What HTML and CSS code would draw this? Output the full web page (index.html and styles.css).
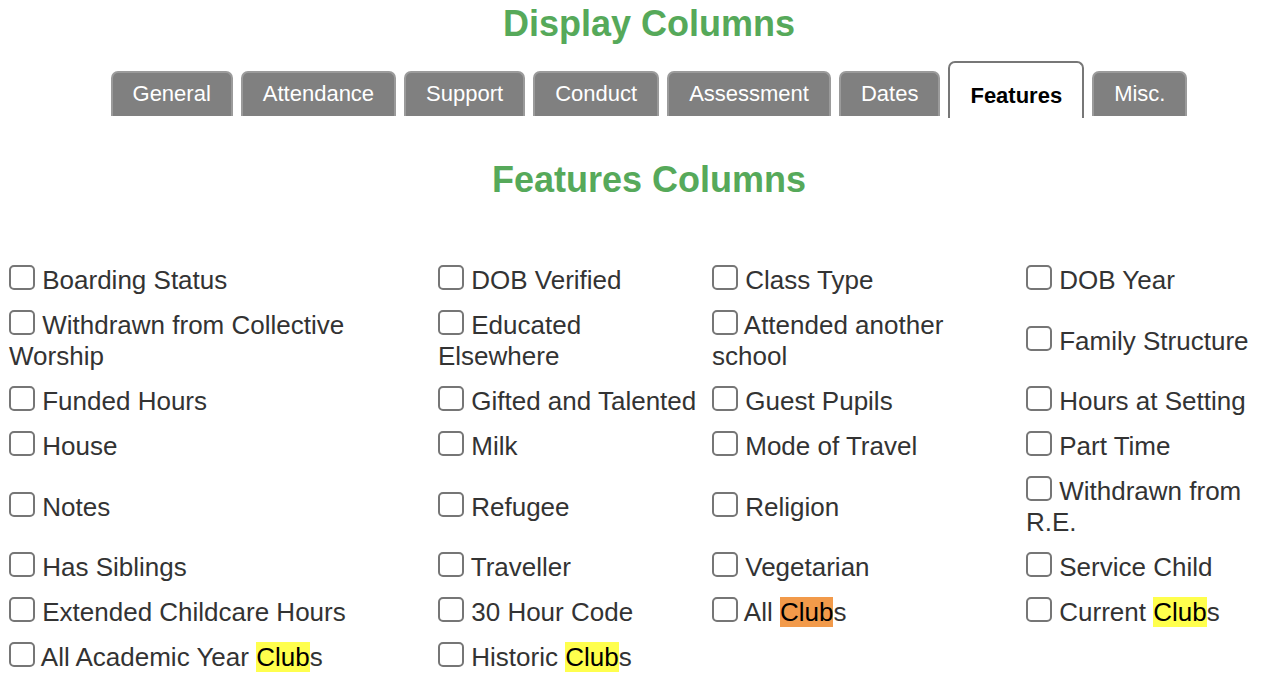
FILE: index.html
```html
<!DOCTYPE html>
<html lang="en">
<head>
    <meta charset="UTF-8">
    <meta name="viewport" content="width=device-width, initial-scale=1.0">
    <link rel="stylesheet" href="styles.css">
    <title>Display Columns</title>
</head>
<body>
    <h1 class="page-heading">Display Columns</h1>

    <div class="tabs">
        <a class="tab" href="#">General</a>
        <a class="tab" href="#">Attendance</a>
        <a class="tab" href="#">Support</a>
        <a class="tab" href="#">Conduct</a>
        <a class="tab" href="#">Assessment</a>
        <a class="tab" href="#">Dates</a>
        <a class="tab active" href="#">Features</a>
        <a class="tab" href="#">Misc.</a>
    </div>

    <h2 class="section-heading">Features Columns</h2>

    <table class="columns">
        <colgroup>
            <col class="col-1">
            <col class="col-2">
            <col class="col-3">
            <col class="col-4">
        </colgroup>
        <tr>
            <td><input type="checkbox" id="boarding"> <label for="boarding">Boarding Status</label></td>
            <td><input type="checkbox" id="dobverified"> <label for="dobverified">DOB Verified</label></td>
            <td><input type="checkbox" id="classtype"> <label for="classtype">Class Type</label></td>
            <td><input type="checkbox" id="dobyear"> <label for="dobyear">DOB Year</label></td>
        </tr>
        <tr>
            <td><input type="checkbox" id="worship"> <label for="worship">Withdrawn from Collective Worship</label></td>
            <td><input type="checkbox" id="elsewhere"> <label for="elsewhere">Educated Elsewhere</label></td>
            <td><input type="checkbox" id="anotherschool"> <label for="anotherschool">Attended another school</label></td>
            <td><input type="checkbox" id="family"> <label for="family">Family Structure</label></td>
        </tr>
        <tr>
            <td><input type="checkbox" id="funded"> <label for="funded">Funded Hours</label></td>
            <td><input type="checkbox" id="gifted"> <label for="gifted">Gifted and Talented</label></td>
            <td><input type="checkbox" id="guest"> <label for="guest">Guest Pupils</label></td>
            <td><input type="checkbox" id="hours"> <label for="hours">Hours at Setting</label></td>
        </tr>
        <tr>
            <td><input type="checkbox" id="house"> <label for="house">House</label></td>
            <td><input type="checkbox" id="milk"> <label for="milk">Milk</label></td>
            <td><input type="checkbox" id="travel"> <label for="travel">Mode of Travel</label></td>
            <td><input type="checkbox" id="parttime"> <label for="parttime">Part Time</label></td>
        </tr>
        <tr>
            <td><input type="checkbox" id="notes"> <label for="notes">Notes</label></td>
            <td><input type="checkbox" id="refugee"> <label for="refugee">Refugee</label></td>
            <td><input type="checkbox" id="religion"> <label for="religion">Religion</label></td>
            <td><input type="checkbox" id="re"> <label for="re">Withdrawn from R.E.</label></td>
        </tr>
        <tr>
            <td><input type="checkbox" id="siblings"> <label for="siblings">Has Siblings</label></td>
            <td><input type="checkbox" id="traveller"> <label for="traveller">Traveller</label></td>
            <td><input type="checkbox" id="vegetarian"> <label for="vegetarian">Vegetarian</label></td>
            <td><input type="checkbox" id="service"> <label for="service">Service Child</label></td>
        </tr>
        <tr>
            <td><input type="checkbox" id="childcare"> <label for="childcare">Extended Childcare Hours</label></td>
            <td><input type="checkbox" id="code30"> <label for="code30">30 Hour Code</label></td>
            <td><input type="checkbox" id="allclubs"> <label for="allclubs">All <mark class="current">Club</mark>s</label></td>
            <td><input type="checkbox" id="currentclubs"> <label for="currentclubs">Current <mark>Club</mark>s</label></td>
        </tr>
        <tr>
            <td><input type="checkbox" id="yearclubs"> <label for="yearclubs">All Academic Year <mark>Club</mark>s</label></td>
            <td><input type="checkbox" id="historic"> <label for="historic">Historic <mark>Club</mark>s</label></td>
            <td></td>
            <td></td>
        </tr>
    </table>
</body>
</html>
```

FILE: styles.css
```css
* {
    box-sizing: border-box;
}
body {
    margin: 3px 8px 8px;
    font-family: "Liberation Sans", Arial, sans-serif;
    color: #333;
    background-color: #fff;
}

.page-heading,
.section-heading {
    margin: 0;
    padding-left: 28px;
    text-align: center;
    font-size: 36px;
    font-weight: bold;
    color: #56a95a;
}

/* tabs */
.tabs {
    display: flex;
    justify-content: center;
    align-items: flex-end;
    gap: 8px;
    margin-top: 16px;
    padding-left: 28px;
}
.tab {
    display: block;
    padding: 9px 20px 10px;
    font-size: 22px;
    line-height: 24px;
    color: #fff;
    text-decoration: none;
    background-color: #808080;
    border: 2px solid #9b9b9b;
    border-bottom: none;
    border-radius: 7px 7px 0 0;
}
.tab.active {
    padding: 21px 20px 10px;
    margin-bottom: -2px;
    font-weight: bold;
    color: #000;
    background-color: #fff;
    border-color: #777;
}

.section-heading {
    margin-top: 43px;
}

/* columns table */
.columns {
    width: 1254px;
    margin-top: 57px;
    table-layout: fixed;
    border-collapse: collapse;
    font-size: 26px;
}
.col-1 { width: 429px; }
.col-2 { width: 274px; }
.col-3 { width: 314px; }
.col-4 { width: 237px; }

.columns td {
    padding: 7px 10px 7px 1px;
    vertical-align: middle;
}

input[type="checkbox"] {
    appearance: none;
    -webkit-appearance: none;
    width: 26px;
    height: 25px;
    margin: 0;
    vertical-align: -1px;
    border: 2px solid #767676;
    border-radius: 5px;
    background-color: #fff;
}

mark {
    background-color: #ffff4d;
    color: #000;
}
mark.current {
    background-color: #f29a4a;
}
```
